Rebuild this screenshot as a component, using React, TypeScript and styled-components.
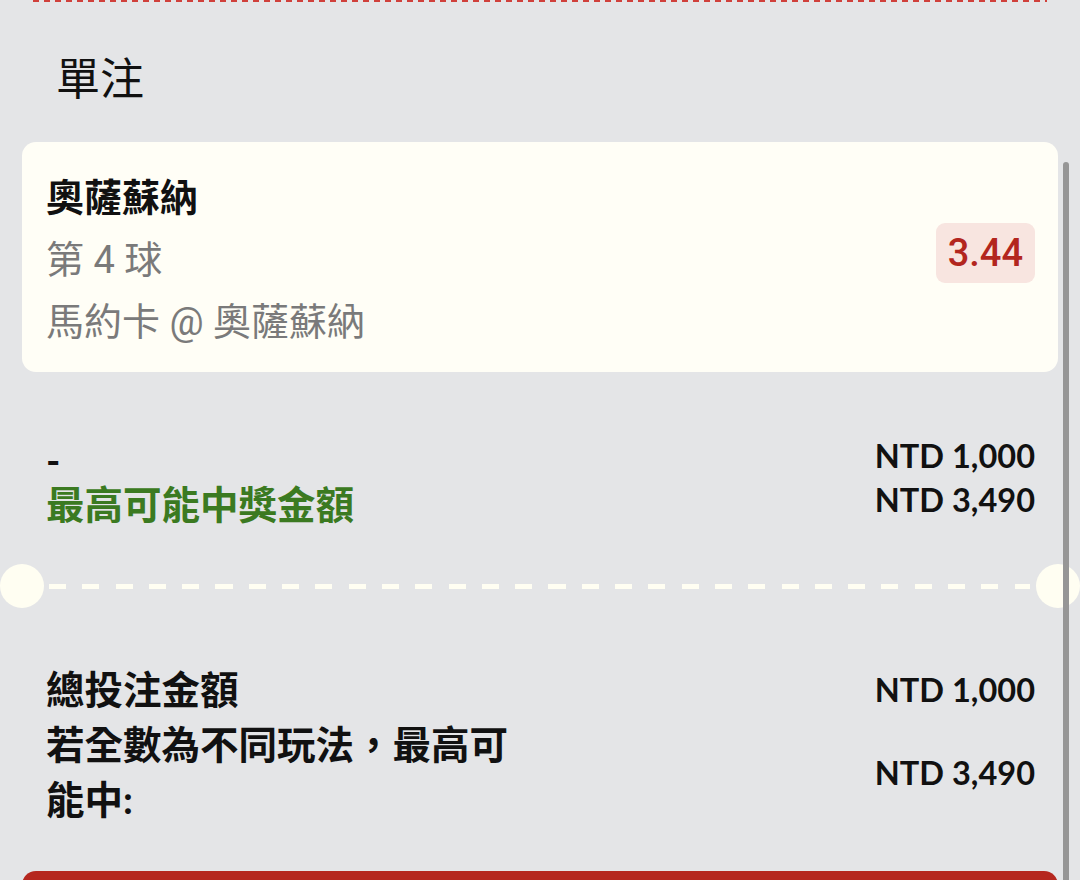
import React from 'react'
import styled, { createGlobalStyle } from 'styled-components'

const GlobalStyle = createGlobalStyle`
  html, body {
    margin: 0;
    padding: 0;
    background: #e4e5e7;
  }
  body {
    font-family: "Noto Sans CJK TC", "Noto Sans", sans-serif;
    color: #111;
  }
`

const cjk = `"Noto Sans CJK TC", "Noto Sans", sans-serif`

const Page = styled.div`
  position: relative;
  width: 1080px;
  height: 880px;
  overflow: hidden;
  background: #e4e5e7;
`

// bottom edge of the previous ticket, only its dashes still visible
const TopEdge = styled.div`
  height: 2px;
  margin: 0 33px;
  background: repeating-linear-gradient(90deg, #d0403b 0 6px, transparent 6px 11px);
`

const SectionTitle = styled.h2`
  margin: 44px 0 36px 56px;
  font-family: ${cjk};
  font-size: 44px;
  font-weight: 400;
  line-height: 60px;
  color: #111;
`

const Card = styled.div`
  display: flex;
  align-items: center;
  justify-content: space-between;
  margin: 0 22px;
  padding: 25px 23px 19px 24px;
  background: #fffef6;
  border-radius: 14px;
`

const Info = styled.div`
  display: flex;
  flex-direction: column;
`

const Line = styled.div<{ $muted?: boolean; $bold?: boolean }>`
  font-family: "Roboto", ${cjk};
  font-size: 38px;
  line-height: 62px;
  font-weight: ${p => (p.$bold ? 700 : 400)};
  color: ${p => (p.$muted ? '#7a7a7a' : '#111')};
  white-space: pre;
`

const Odds = styled.div`
  height: 60px;
  padding: 0 12px;
  margin-top: -14px;
  border-radius: 9px;
  background: #f8e5e0;
  color: #b3261e;
  font-family: "Roboto", sans-serif;
  font-size: 38px;
  font-weight: 500;
  line-height: 60px;
`

const Row = styled.div<{ $top?: number }>`
  display: flex;
  align-items: center;
  justify-content: space-between;
  padding: 0 45px 0 46px;
  margin-top: ${p => p.$top || 0}px;
`

const Col = styled.div<{ $right?: boolean; $width?: number; $lift?: number }>`
  display: flex;
  flex-direction: column;
  align-items: ${p => (p.$right ? 'flex-end' : 'flex-start')};
  max-width: ${p => (p.$width ? `${p.$width}px` : 'none')};
  margin-top: ${p => (p.$lift ? -p.$lift * 2 : 0)}px;
`

const Label = styled.div<{ $green?: boolean; $lh?: number }>`
  font-family: "Lato", ${cjk};
  font-size: 38.5px;
  font-weight: 700;
  line-height: ${p => p.$lh || 44}px;
  color: ${p => (p.$green ? '#3b7a21' : '#111')};
`

const Amount = styled.div<{ $lh?: number }>`
  font-family: "Lato", sans-serif;
  font-size: 32.5px;
  font-weight: 700;
  line-height: ${p => p.$lh || 44}px;
  color: #111;
  white-space: nowrap;
`

// perforation between stake and summary, with the two round notches
const Perforation = styled.div`
  position: relative;
  height: 44px;
  margin-top: 38px;

  &::before {
    content: '';
    position: absolute;
    left: 49px;
    right: 50px;
    top: 20px;
    height: 5px;
    background: repeating-linear-gradient(90deg, #fffef2 0 17px, transparent 17px 33.3px);
  }
`

const Notch = styled.span<{ $side: 'left' | 'right' }>`
  position: absolute;
  top: 0;
  ${p => (p.$side === 'left' ? 'left: 0;' : 'left: 1036px;')}
  width: 44px;
  height: 44px;
  border-radius: 50%;
  background: #fffef2;
`

const Summary = styled.div`
  margin-top: 54px;
`

const SubmitBar = styled.div`
  height: 80px;
  margin: 44px 22px 0;
  border-radius: 14px 14px 0 0;
  background: #b5271f;
`

const Scrollbar = styled.div`
  position: absolute;
  top: 162px;
  right: 11px;
  bottom: -10px;
  width: 6px;
  border-radius: 3px;
  background: #969696;
`

const App: React.FC = () => {
  return (
    <>
      <GlobalStyle />
      <Page>
        <TopEdge />
        <SectionTitle>單注</SectionTitle>

        <Card>
          <Info>
            <Line $bold>奧薩蘇納</Line>
            <Line $muted>第 4 球</Line>
            <Line $muted>馬約卡 @ 奧薩蘇納</Line>
          </Info>
          <Odds>3.44</Odds>
        </Card>

        <Row $top={66}>
          <Col>
            <Label>-</Label>
            <Label $green>最高可能中獎金額</Label>
          </Col>
          <Col $right $lift={4}>
            <Amount>NTD 1,000</Amount>
            <Amount>NTD 3,490</Amount>
          </Col>
        </Row>

        <Perforation>
          <Notch $side="left" />
          <Notch $side="right" />
        </Perforation>

        <Summary>
          <Row>
            <Label $lh={55}>總投注金額</Label>
            <Amount $lh={55}>NTD 1,000</Amount>
          </Row>
          <Row>
            <Col $width={490}>
              <Label $lh={55}>若全數為不同玩法，最高可能中:</Label>
            </Col>
            <Amount $lh={55}>NTD 3,490</Amount>
          </Row>
        </Summary>

        <SubmitBar />
        <Scrollbar />
      </Page>
    </>
  )
}

export default App
